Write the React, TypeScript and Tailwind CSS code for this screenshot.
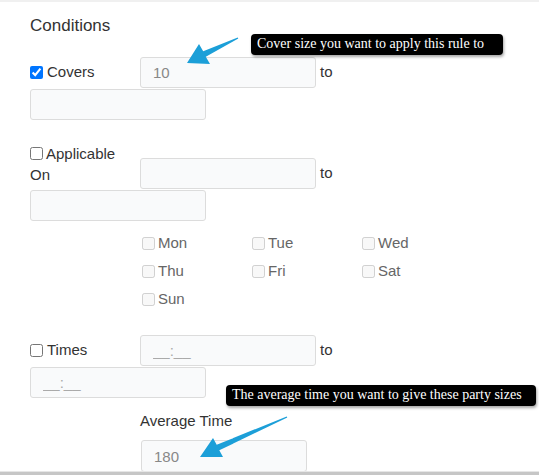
const days = ['Mon', 'Tue', 'Wed', 'Thu', 'Fri', 'Sat', 'Sun'];

const inputClass =
  'h-[31px] rounded-[3px] border border-[#dcdcdc] bg-[#f9fafb] px-3 text-[15px] text-[#888] outline-none placeholder:text-[#aaa]';

function Tooltip({ text, className }: { text: string; className: string }) {
  return (
    <div
      className={`absolute h-[21px] rounded-[4px] bg-black pl-[6px] font-['Liberation_Serif','Times_New_Roman',serif] text-[14px] leading-[19px] whitespace-nowrap text-white shadow-[1px_2px_3px_rgba(0,0,0,0.35)] ${className}`}
    >
      {text}
    </div>
  );
}

export default function App() {
  return (
    <div className="relative flex h-[475px] flex-col overflow-hidden bg-white font-['Liberation_Sans',Arial,sans-serif] text-[#333]">
      <div className="h-[2px] shrink-0 bg-[#f0f0f0]" />

      <div className="min-h-0 flex-1 overflow-hidden pl-[30px]">
        <h3 className="mt-[13px] text-[17px] leading-[22px]">Conditions</h3>

        {/* Covers */}
        <div className="mt-[20px] flex h-[31px] items-center">
          <label className="flex w-[110px] items-center gap-1 text-[15px]">
            <input type="checkbox" defaultChecked className="m-0 h-[13px] w-[13px]" />
            Covers
          </label>
          <input className={`${inputClass} w-[176px]`} defaultValue="10" />
          <span className="ml-1 text-[15px]">to</span>
        </div>
        <input className={`${inputClass} mt-px block w-[176px]`} />

        {/* Applicable On */}
        <div className="mt-[23px] flex items-start">
          <label className="w-[110px] text-[15px] leading-[21px]">
            <input type="checkbox" className="m-0 mr-[3px] h-[13px] w-[13px] align-[-1px]" />
            Applicable
            <br />
            On
          </label>
          <div className="mt-[15px] flex items-center">
            <input className={`${inputClass} w-[176px]`} />
            <span className="ml-1 text-[15px]">to</span>
          </div>
        </div>
        <input className={`${inputClass} mt-px block w-[176px]`} />

        {/* Days */}
        <div className="mt-[8px] ml-[112px] grid grid-cols-[110px_110px_110px] auto-rows-[28px]">
          {days.map((d) => (
            <label key={d} className="flex items-center gap-[3px] text-[15px] text-[#666]">
              <input type="checkbox" disabled className="m-0 h-[13px] w-[13px]" />
              {d}
            </label>
          ))}
        </div>

        {/* Times */}
        <div className="mt-[22px] flex h-[31px] items-center">
          <label className="flex w-[110px] items-center gap-1 text-[15px]">
            <input type="checkbox" className="m-0 h-[13px] w-[13px]" />
            Times
          </label>
          <input className={`${inputClass} w-[176px]`} placeholder="__:__" />
          <span className="ml-1 text-[15px]">to</span>
        </div>
        <input className={`${inputClass} mt-px block w-[176px]`} placeholder="__:__" />

        {/* Average time */}
        <div className="mt-[12px] ml-[110px] text-[15px] leading-[21px]">Average Time</div>
        <input className={`${inputClass} mt-[9px] ml-[111px] block h-[32px] w-[166px]`} defaultValue="180" />
      </div>

      <div className="h-px shrink-0 bg-[#e6e6e6]" />
      <div className="h-[3px] shrink-0 bg-[#c6c6c6]" />

      {/* annotations */}
      <Tooltip text="Cover size you want to apply this rule to" className="left-[251px] top-[34px] w-[252px]" />
      <Tooltip text="The average time you want to give these party sizes" className="left-[226px] top-[385px] w-[310px]" />

      <svg className="pointer-events-none absolute left-0 top-0" width="539" height="475" viewBox="0 0 539 475">
        <polygon
          fill="#1c9fd8"
          points="187,63 199,44 203.2,51.3 237.7,37.4 238.3,38.6 205.8,56.7 210,64"
        />
        <polygon
          fill="#1c9fd8"
          points="200,457 213,438 216.7,444.8 286.7,416.4 287.3,417.6 219.3,450.2 223,457"
        />
      </svg>
    </div>
  );
}
